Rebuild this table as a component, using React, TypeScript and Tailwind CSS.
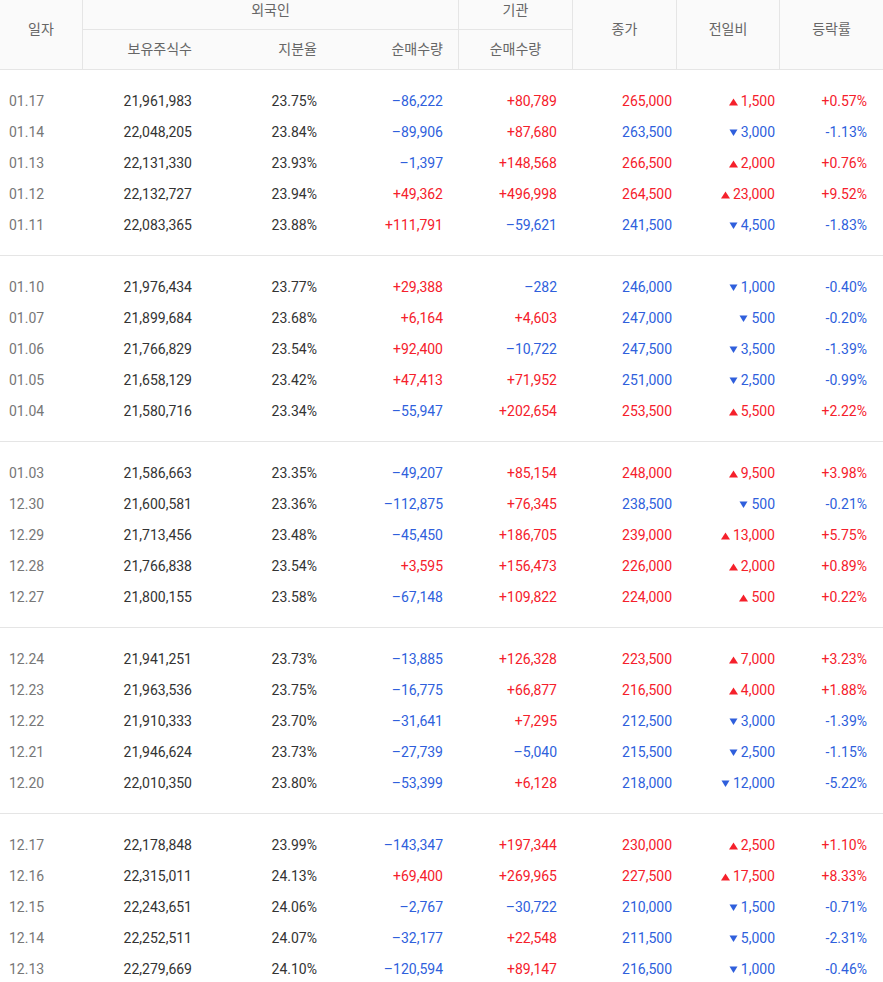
const groups: string[][] = [
  [
    "01.17|21,961,983|23.75%|-86,222|+80,789|265,000|u|1,500|+0.57%",
    "01.14|22,048,205|23.84%|-89,906|+87,680|263,500|d|3,000|-1.13%",
    "01.13|22,131,330|23.93%|-1,397|+148,568|266,500|u|2,000|+0.76%",
    "01.12|22,132,727|23.94%|+49,362|+496,998|264,500|u|23,000|+9.52%",
    "01.11|22,083,365|23.88%|+111,791|-59,621|241,500|d|4,500|-1.83%",
  ],
  [
    "01.10|21,976,434|23.77%|+29,388|-282|246,000|d|1,000|-0.40%",
    "01.07|21,899,684|23.68%|+6,164|+4,603|247,000|d|500|-0.20%",
    "01.06|21,766,829|23.54%|+92,400|-10,722|247,500|d|3,500|-1.39%",
    "01.05|21,658,129|23.42%|+47,413|+71,952|251,000|d|2,500|-0.99%",
    "01.04|21,580,716|23.34%|-55,947|+202,654|253,500|u|5,500|+2.22%",
  ],
  [
    "01.03|21,586,663|23.35%|-49,207|+85,154|248,000|u|9,500|+3.98%",
    "12.30|21,600,581|23.36%|-112,875|+76,345|238,500|d|500|-0.21%",
    "12.29|21,713,456|23.48%|-45,450|+186,705|239,000|u|13,000|+5.75%",
    "12.28|21,766,838|23.54%|+3,595|+156,473|226,000|u|2,000|+0.89%",
    "12.27|21,800,155|23.58%|-67,148|+109,822|224,000|u|500|+0.22%",
  ],
  [
    "12.24|21,941,251|23.73%|-13,885|+126,328|223,500|u|7,000|+3.23%",
    "12.23|21,963,536|23.75%|-16,775|+66,877|216,500|u|4,000|+1.88%",
    "12.22|21,910,333|23.70%|-31,641|+7,295|212,500|d|3,000|-1.39%",
    "12.21|21,946,624|23.73%|-27,739|-5,040|215,500|d|2,500|-1.15%",
    "12.20|22,010,350|23.80%|-53,399|+6,128|218,000|d|12,000|-5.22%",
  ],
  [
    "12.17|22,178,848|23.99%|-143,347|+197,344|230,000|u|2,500|+1.10%",
    "12.16|22,315,011|24.13%|+69,400|+269,965|227,500|u|17,500|+8.33%",
    "12.15|22,243,651|24.06%|-2,767|-30,722|210,000|d|1,500|-0.71%",
    "12.14|22,252,511|24.07%|-32,177|+22,548|211,500|d|5,000|-2.31%",
    "12.13|22,279,669|24.10%|-120,594|+89,147|216,500|d|1,000|-0.46%",
  ],
];

const RED = "text-[#f5202b]";
const BLUE = "text-[#2f5fdc]";
const cols = "grid grid-cols-[82px_125px_125px_126px_114px_104px_103px_104px]";

const signed = (v: string) =>
  v.startsWith("-") ? (
    <span className={BLUE}>{"\u2013" + v.slice(1)}</span>
  ) : (
    <span className={RED}>{v}</span>
  );

const Tri = ({ up }: { up: boolean }) =>
  up ? (
    <svg width="9" height="8" viewBox="0 0 9 8" className="mr-[3px]">
      <path d="M4.5 0.5 L9 7.5 L0 7.5 Z" fill="#f5202b" />
    </svg>
  ) : (
    <svg width="9" height="8" viewBox="0 0 9 8" className="mr-[3px]">
      <path d="M0.5 0.5 L8.5 0.5 L4.5 7 Z" fill="#2f5fdc" />
    </svg>
  );

const Row = ({ line }: { line: string }) => {
  const [date, hold, ratio, frg, inst, close, dir, diff, rate] = line.split("|");
  const up = dir === "u";
  const tone = up ? RED : BLUE;
  return (
    <div className={`${cols} h-[31px] items-center text-[14px] text-[#333]`}>
      <div className="pl-[9px] text-[#777]">{date}</div>
      <div className="pr-[15px] text-right">{hold}</div>
      <div className="pr-[15px] text-right">{ratio}</div>
      <div className="pr-[15px] text-right">{signed(frg)}</div>
      <div className="pr-[15px] text-right">{signed(inst)}</div>
      <div className={`pr-[4px] text-right ${tone}`}>{close}</div>
      <div className={`pr-[4px] flex items-center justify-end ${tone}`}>
        <Tri up={up} />
        {diff}
      </div>
      <div className={`pr-[16px] text-right ${tone}`}>{rate}</div>
    </div>
  );
};

export default function App() {
  return (
    <div
      className="w-[883px] bg-white"
      style={{ fontFamily: 'Roboto, "Noto Sans CJK KR", sans-serif' }}
    >
      {/* table head */}
      <div className="bg-[#fafafa] border-b border-[#e5e5e5] text-[14px] text-[#666] flex h-[70px]">
        <div className="w-[83px] border-r border-[#e5e5e5] flex items-center justify-center pb-[10px]">
          일자
        </div>
        <div className="w-[376px] border-r border-[#e5e5e5] flex flex-col">
          <div className="h-[30px] border-b border-[#e5e5e5] flex items-center justify-center pb-[8px]">
            외국인
          </div>
          <div className="flex-1 flex items-center">
            <div className="w-[124px] pr-[15px] text-right">보유주식수</div>
            <div className="w-[125px] pr-[15px] text-right">지분율</div>
            <div className="w-[126px] pr-[15px] text-right">순매수량</div>
          </div>
        </div>
        <div className="w-[114px] border-r border-[#e5e5e5] flex flex-col">
          <div className="h-[30px] border-b border-[#e5e5e5] flex items-center justify-center pb-[8px]">
            기관
          </div>
          <div className="flex-1 flex items-center justify-center">순매수량</div>
        </div>
        <div className="w-[104px] border-r border-[#e5e5e5] flex items-center justify-center pb-[10px]">
          종가
        </div>
        <div className="w-[103px] border-r border-[#e5e5e5] flex items-center justify-center pb-[10px]">
          전일비
        </div>
        <div className="w-[103px] flex items-center justify-center pb-[10px]">
          등락률
        </div>
      </div>

      {/* body */}
      {groups.map((g, i) => (
        <div
          key={i}
          className={`pt-[16px] pb-[14px] ${i < groups.length - 1 ? "border-b border-[#e5e5e5]" : ""}`}
        >
          {g.map((line) => (
            <Row key={line} line={line} />
          ))}
        </div>
      ))}
    </div>
  );
}
